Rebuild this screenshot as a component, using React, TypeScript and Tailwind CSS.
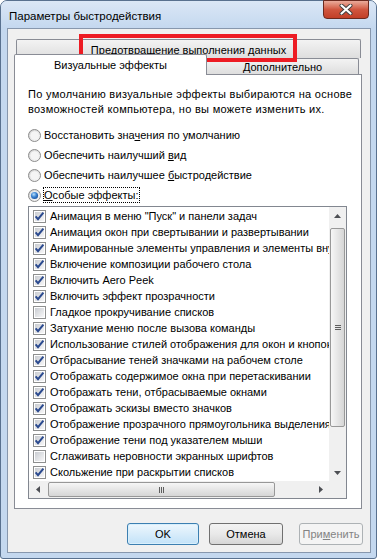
import React from 'react';

const items: [string, boolean][] = [
  ['Анимация в меню "Пуск" и панели задач', true],
  ['Анимация окон при свертывании и развертывании', true],
  ['Анимированные элементы управления и элементы внутри окна', true],
  ['Включение композиции рабочего стола', true],
  ['Включить Aero Peek', true],
  ['Включить эффект прозрачности', true],
  ['Гладкое прокручивание списков', false],
  ['Затухание меню после вызова команды', true],
  ['Использование стилей отображения для окон и кнопок', true],
  ['Отбрасывание теней значками на рабочем столе', true],
  ['Отображать содержимое окна при перетаскивании', true],
  ['Отображать тени, отбрасываемые окнами', true],
  ['Отображать эскизы вместо значков', true],
  ['Отображение прозрачного прямоугольника выделения', true],
  ['Отображение тени под указателем мыши', true],
  ['Сглаживать неровности экранных шрифтов', false],
  ['Скольжение при раскрытии списков', true],
];

// общие градиенты для чекбоксов и радиокнопок
function Defs() {
  return (
    <svg width="0" height="0" className="absolute">
      <defs>
        <linearGradient id="boxFill" x1="0" y1="0" x2="1" y2="1">
          <stop offset="0" stopColor="#c9ccd1" />
          <stop offset="1" stopColor="#f7f7f8" />
        </linearGradient>
        <linearGradient id="radioFill" x1="0" y1="0" x2="1" y2="1">
          <stop offset="0" stopColor="#cfcfcf" />
          <stop offset="1" stopColor="#fbfbfb" />
        </linearGradient>
        <radialGradient id="radioDot" cx="0.4" cy="0.35" r="0.7">
          <stop offset="0" stopColor="#b9e0fb" />
          <stop offset="0.5" stopColor="#3f86d3" />
          <stop offset="1" stopColor="#174f9c" />
        </radialGradient>
      </defs>
    </svg>
  );
}

function CheckBox({ on }: { on: boolean }) {
  return (
    <svg width="13" height="13" viewBox="0 0 13 13" className="shrink-0">
      <rect x="0.5" y="0.5" width="12" height="12" fill="#fff" stroke="#8e8f8f" />
      <rect x="2" y="2" width="9" height="9" fill="url(#boxFill)" />
      {on && (
        <path d="M2.6 6.4 L5 9.2 L10.4 2.6" fill="none" stroke="#2b4a8f" strokeWidth="2" />
      )}
    </svg>
  );
}

function Radio({ on }: { on?: boolean }) {
  return (
    <svg width="13" height="13" viewBox="0 0 13 13" className="shrink-0">
      <circle cx="6.5" cy="6.5" r="6" fill="url(#radioFill)" stroke="#8d8d8d" />
      <circle cx="6.5" cy="6.5" r="4.2" fill="#f4f4f4" />
      {on && <circle cx="6.5" cy="6.5" r="3.6" fill="url(#radioDot)" />}
    </svg>
  );
}

function Arrow({ dir }: { dir: 'up' | 'down' | 'left' | 'right' }) {
  const pts = {
    up: '0,4 3.5,0 7,4',
    down: '0,0 7,0 3.5,4',
    left: '4,0 4,7 0,3.5',
    right: '0,0 4,3.5 0,7',
  }[dir];
  const v = dir === 'up' || dir === 'down';
  return (
    <svg width={v ? 7 : 4} height={v ? 4 : 7} viewBox={v ? '0 0 7 4' : '0 0 4 7'}>
      <polygon points={pts} fill="#4d4f54" />
    </svg>
  );
}

export default function App() {
  return (
    <div className="w-[377px] h-[559px] bg-white font-['Liberation_Sans',Arial,sans-serif] text-[11px] text-black">
      <Defs />
      <div className="relative w-[377px] h-[559px] flex flex-col rounded-t-[7px] rounded-b-[3px] border border-[#59718f] bg-[#c4d8ef]">
        {/* заголовок окна */}
        <div className="h-[27px] flex items-start rounded-t-[6px] bg-gradient-to-b from-[#dbe7f6] to-[#c4d8ef]">
          <span className="pl-[8px] pt-[7px] leading-[16px] text-[11.5px]">Параметры быстродействия</span>
          <div className="ml-auto mr-[7px] -mt-px w-[46px] h-[19px] flex items-center justify-center rounded-b-[4px] border border-[#6b2a1f] bg-gradient-to-b from-[#e9ab9b] via-[#d0563f] to-[#c23f27]">
            <svg width="14" height="11" viewBox="0 0 14 11">
              <path d="M2.5 1.5 L11.5 9.5 M11.5 1.5 L2.5 9.5" stroke="#3d3d3d" strokeWidth="4" strokeLinecap="round" />
              <path d="M2.5 1.5 L11.5 9.5 M11.5 1.5 L2.5 9.5" stroke="#fff" strokeWidth="2.2" strokeLinecap="round" />
            </svg>
          </div>
        </div>

        {/* клиентская область */}
        <div className="flex-1 ml-[6px] mr-[5px] mb-[5px] border border-[#8797ad] bg-[#f0f0f0] flex flex-col">
          {/* задний ряд вкладок */}
          <div className="mt-[10px] ml-[8px] w-[345px] h-[19px] border-t border-l border-r border-[#898c95] rounded-t-[2px] bg-gradient-to-b from-[#f3f3f3] to-[#dedede] text-center leading-[16px] pt-[2px]">
            Предотвращение выполнения данных
          </div>
          {/* передний ряд вкладок */}
          <div className="-mt-[4px] h-[20px] flex items-end">
            <div className="relative z-10 ml-[6px] w-[193px] h-[21px] -mb-px border-t border-l border-r border-[#898c95] rounded-t-[2px] bg-white text-center leading-[16px] pt-[2px]">
              Визуальные эффекты
            </div>
            <div className="-ml-px w-[153px] h-[16px] border-t border-l border-r border-[#898c95] rounded-t-[2px] bg-gradient-to-b from-[#f3f3f3] to-[#dedede] text-center leading-[14px] pt-px">
              Дополнительно
            </div>
          </div>

          {/* панель вкладки */}
          <div className="ml-[6px] w-[348px] h-[435px] border border-[#898c95] bg-white flex flex-col">
            <p className="pl-[13px] pt-[12px] leading-[15px] tracking-[0.3px] whitespace-nowrap">
              По умолчанию визуальные эффекты выбираются на основе
              <br />
              возможностей компьютера, но вы можете изменить их.
            </p>
            <div className="mt-[8px] flex flex-col">
              <div className="h-[20px] pl-[13px] flex items-center gap-[3px]">
                <Radio />
                <span>
                  Восстановить зна<u>ч</u>ения по умолчанию
                </span>
              </div>
              <div className="h-[20px] pl-[13px] flex items-center gap-[3px]">
                <Radio />
                <span>
                  Обеспечить наилучший <u>в</u>ид
                </span>
              </div>
              <div className="h-[20px] pl-[13px] flex items-center gap-[3px]">
                <Radio />
                <span>
                  Обеспечить наилучшее <u>б</u>ыстродействие
                </span>
              </div>
              <div className="h-[20px] pl-[13px] flex items-center gap-[2px]">
                <Radio on />
                <span className="border border-dotted border-black leading-[14px] pr-[1px]">
                  <u>О</u>собые эффекты:
                </span>
              </div>
            </div>

            {/* список с флажками */}
            <div className="mt-[1px] ml-[13px] w-[319px] h-[293px] border border-[#828790] flex flex-col">
              <div className="flex flex-1 min-h-0">
                <div className="flex-1 min-w-0 overflow-hidden pt-[1px]">
                  {items.map(([label, on]) => (
                    <div key={label} className="h-[16px] pl-[4px] flex items-center gap-[4px] whitespace-nowrap">
                      <CheckBox on={on} />
                      <span className="leading-[16px]">{label}</span>
                    </div>
                  ))}
                </div>
                <div className="w-[17px] bg-[#f0f0f0] flex flex-col">
                  <div className="h-[17px] flex items-center justify-center">
                    <Arrow dir="up" />
                  </div>
                  <div className="flex-1 pt-[4px]">
                    <div className="ml-px w-[15px] h-[199px] rounded-[2px] border border-[#989898] bg-gradient-to-r from-[#f6f6f6] to-[#d6d6d6] flex flex-col items-center justify-center gap-[1px]">
                      <div className="w-[6px] h-px bg-[#5e5e5e]" />
                      <div className="w-[6px] h-px bg-[#5e5e5e]" />
                      <div className="w-[6px] h-px bg-[#5e5e5e]" />
                    </div>
                  </div>
                  <div className="h-[17px] flex items-center justify-center">
                    <Arrow dir="down" />
                  </div>
                </div>
              </div>
              <div className="h-[17px] flex bg-[#f0f0f0]">
                <div className="w-[17px] flex items-center justify-center">
                  <Arrow dir="left" />
                </div>
                <div className="flex-1 pl-[2px] pt-px">
                  <div className="w-[227px] h-[15px] rounded-[2px] border border-[#989898] bg-gradient-to-b from-[#f6f6f6] to-[#d6d6d6] flex items-center justify-center gap-[1px]">
                    <div className="w-px h-[6px] bg-[#5e5e5e]" />
                    <div className="w-px h-[6px] bg-[#5e5e5e]" />
                    <div className="w-px h-[6px] bg-[#5e5e5e]" />
                  </div>
                </div>
                <div className="w-[17px] flex items-center justify-center">
                  <Arrow dir="right" />
                </div>
                <div className="w-[17px] bg-[#f0f0f0]" />
              </div>
            </div>
          </div>

          {/* кнопки */}
          <div className="mt-[14px] h-[22px] flex">
            <button className="ml-[119px] w-[72px] h-[22px] rounded-[3px] border border-[#3c7fb1] bg-gradient-to-b from-[#eef7fd] to-[#c2e2f8] shadow-[inset_0_0_0_1px_#d8effc]">
              OK
            </button>
            <button className="ml-[10px] w-[74px] h-[22px] rounded-[3px] border border-[#707070] bg-gradient-to-b from-[#f3f3f3] via-[#e9e9e9] to-[#d6d6d6]">
              Отмена
            </button>
            <button className="ml-[16px] w-[64px] h-[22px] rounded-[3px] border border-[#adb2b5] bg-[#f4f4f4] text-[#838383]">
              При<u>м</u>енить
            </button>
          </div>
        </div>

        {/* красная рамка выделения */}
        <div className="absolute left-[78px] top-[33px] w-[218px] h-[28px] border-4 border-[#ed1c24]" />
      </div>
    </div>
  );
}
